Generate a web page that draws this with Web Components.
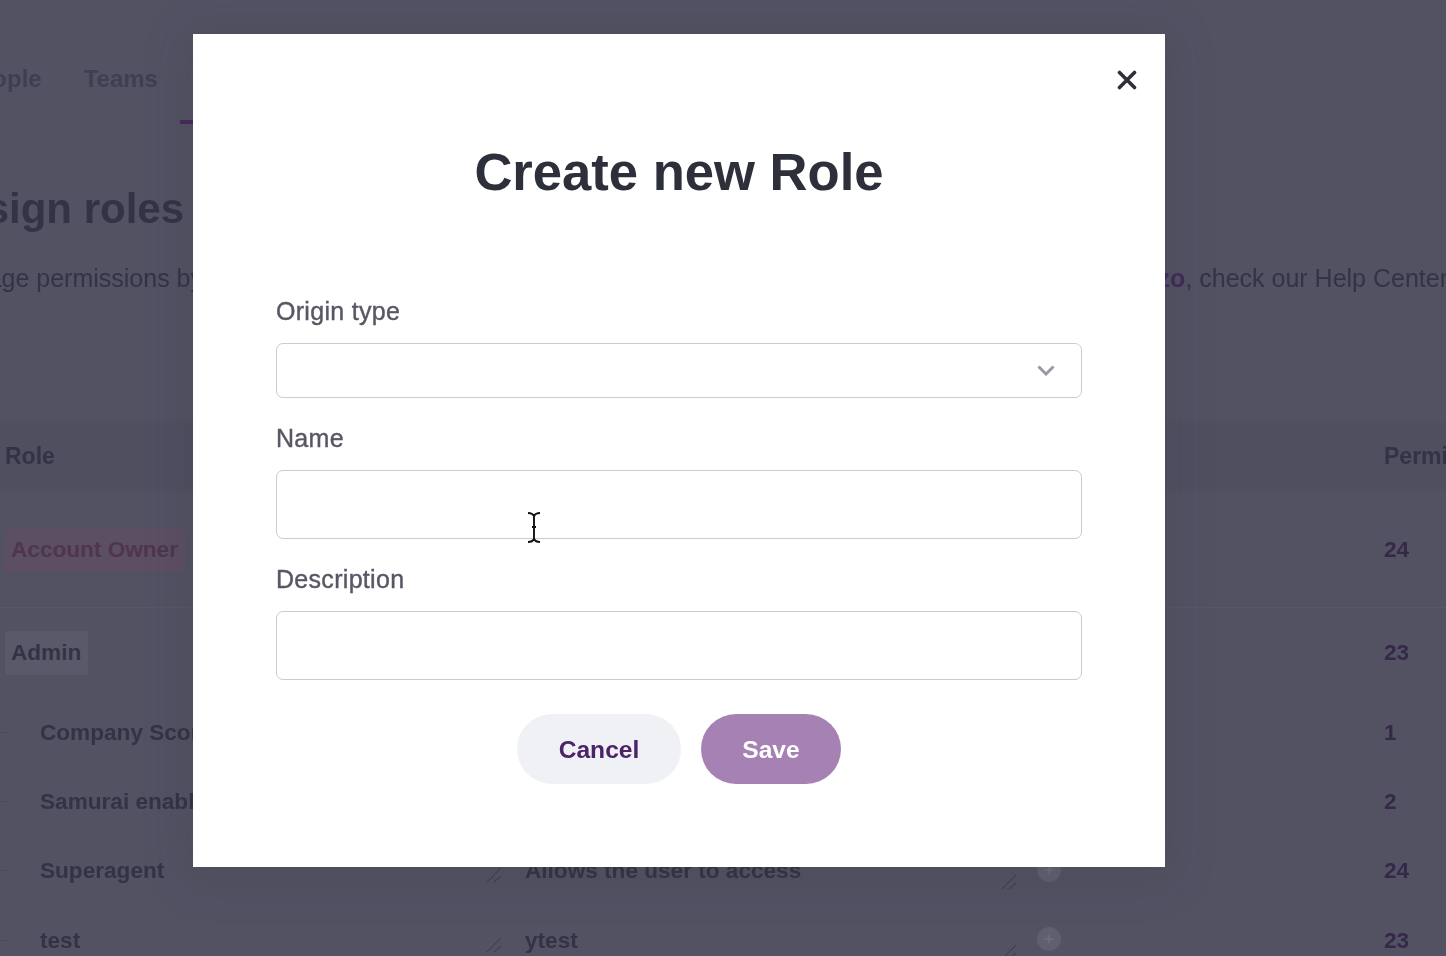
<!DOCTYPE html>
<html lang="en">
<head>
<meta charset="utf-8">
<title>Create new Role</title>
<style>
    html, body {
        margin: 0;
        height: 100%;
        overflow: hidden;
        background: #525263;
        font-family: "Liberation Sans", Arial, sans-serif;
    }
</style>
</head>
<body>
<roles-page></roles-page>
<role-modal></role-modal>

<script>
class RoleRow extends HTMLElement {
    connectedCallback() {
        const label = this.getAttribute('label') || '';
        const desc = this.getAttribute('desc') || '';
        const count = this.getAttribute('count') || '';
        const badge = this.getAttribute('badge');
        const first = badge
            ? `<span class="badge ${badge}">${label}</span>`
            : `<i class="tick"></i><span class="name">${label}</span>`;
        const handle = `<svg class="handle" width="18" height="16" viewBox="0 0 18 16" fill="none" stroke="#383849" stroke-width="1"><path d="M1 15 15 1M8 15l7-6"/></svg>`;
        const tools = desc ? `
            <div class="cell first">${first}${handle}</div>
            <div class="cell desc"><span class="name">${desc}</span>${handle}</div>
            <div class="cell add"><svg width="24" height="24" viewBox="0 0 24 24"><circle cx="12" cy="12" r="12" fill="#5f5f70"/><path d="M12 7.5v9M7.5 12h9" stroke="#6f6f7f" stroke-width="1.5"/></svg></div>
        ` : `
            <div class="cell first">${first}</div>
            <div class="cell desc"></div>
            <div class="cell add"></div>
        `;
        this.attachShadow({ mode: 'open' });
        this.shadowRoot.innerHTML = `
            <style>
                :host {
                    display: grid;
                    grid-template-columns: 520px 500px 359px 1fr;
                    align-items: center;
                    box-sizing: border-box;
                    padding-left: 5px;
                    font-size: 22.6px;
                    font-weight: 700;
                    color: #333345;
                }
                .cell {
                    display: flex;
                    align-items: center;
                    position: relative;
                    min-height: 30px;
                }
                .tick {
                    position: absolute;
                    left: -5px;
                    top: 14px;
                    width: 9px;
                    height: 1px;
                    background: #4b4b5c;
                }
                .first .name { margin-left: 35px; }
                .handle {
                    position: absolute;
                    right: 21px;
                    top: 11px;
                }
                .desc .handle { right: 6px; top: 18px; }
                .badge {
                    display: inline-block;
                    line-height: 44px;
                    padding: 0 7px 0 6px;
                    border-radius: 3px;
                }
                .badge.owner { background: #5c4f62; color: #4f3550; }
                .badge.admin { background: #59596a; color: #333345; }
                .add { padding-left: 12px; }
                .add svg { margin-top: -3px; }
                .count { color: #362848; }
            </style>
            ${tools}
            <div class="cell count">${count}</div>
        `;
    }
}

class RolesPage extends HTMLElement {
    connectedCallback() {
        this.attachShadow({ mode: 'open' });
        this.shadowRoot.innerHTML = `
            <style>
                :host {
                    display: block;
                    width: 1446px;
                    height: 956px;
                    overflow: hidden;
                    color: #333345;
                    filter: blur(0.7px);
                }
                .tabs {
                    display: flex;
                    gap: 42px;
                    margin-left: -37px;
                    padding-top: 65px;
                    font-size: 24px;
                    font-weight: 700;
                    line-height: 28px;
                    color: #3f3f51;
                }
                .active {
                    height: 4px;
                    width: 60px;
                    margin: 27px 0 0 180px;
                    background: #452a5c;
                }
                h1 {
                    margin: 60px 0 0 -68px;
                    font-size: 42px;
                    line-height: 50px;
                    white-space: nowrap;
                }
                .sub {
                    display: flex;
                    justify-content: space-between;
                    margin: 30px -2px 0 -61px;
                    font-size: 25px;
                    line-height: 28px;
                    white-space: nowrap;
                }
                .sub b { color: #412b59; }
                .head {
                    display: flex;
                    justify-content: space-between;
                    margin-top: 129px;
                    height: 70px;
                    align-items: center;
                    padding: 0 0 0 5px;
                    background: #4f4f60;
                    font-size: 23px;
                    font-weight: 700;
                    box-sizing: border-box;
                }
                .head span:last-child { width: 62px; overflow: hidden; }
                .owner-row { height: 117px; padding-top: 2px; border-bottom: 1px solid #575767; }
                .admin-row { height: 90px; }
                .child-row { height: 69.3px; }
            </style>
            <nav class="tabs"><span>People</span><span>Teams</span></nav>
            <div class="active"></div>
            <h1>Assign roles</h1>
            <p class="sub" style="margin-bottom:0"><span>Manage permissions by</span><span><b>zo</b>, check our Help Center</span></p>
            <div class="head"><span>Role</span><span>Permissions</span></div>
            <role-row class="owner-row" badge="owner" label="Account Owner" count="24"></role-row>
            <role-row class="admin-row" badge="admin" label="Admin" count="23"></role-row>
            <role-row class="child-row" label="Company Score" count="1"></role-row>
            <role-row class="child-row" label="Samurai enabled" count="2"></role-row>
            <role-row class="child-row" label="Superagent" desc="Allows the user to access" count="24"></role-row>
            <role-row class="child-row" label="test" desc="ytest" count="23"></role-row>
        `;
    }
}

class RoleField extends HTMLElement {
    connectedCallback() {
        const select = this.hasAttribute('select');
        this.attachShadow({ mode: 'open' });
        this.shadowRoot.innerHTML = `
            <style>
                :host {
                    display: block;
                    color: #575765;
                }
                label {
                    display: block;
                    font-size: 25px;
                    letter-spacing: 0.3px;
                    line-height: 28px;
                    -webkit-text-stroke: 0.4px #575765;
                }
                .box {
                    display: flex;
                    align-items: center;
                    justify-content: flex-end;
                    box-sizing: border-box;
                    height: var(--box-height, 69px);
                    margin-top: var(--box-gap, 18px);
                    padding-right: 26px;
                    border: 1px solid #c8ccd4;
                    border-radius: 7px;
                    background: #fff;
                }
            </style>
            <label><slot></slot></label>
            <div class="box">
                ${select ? `<svg width="18" height="11" viewBox="0 0 18 11" fill="none" stroke="#9a9aa6" stroke-width="3"><path d="M1.5 1.5 9 9l7.5-7.5"/></svg>` : ''}
            </div>
        `;
    }
}

class RoleButton extends HTMLElement {
    connectedCallback() {
        this.attachShadow({ mode: 'open' });
        this.shadowRoot.innerHTML = `
            <style>
                :host {
                    display: flex;
                    align-items: center;
                    justify-content: center;
                    box-sizing: border-box;
                    height: 70px;
                    padding-top: 2px;
                    border-radius: 35px;
                    font-size: 24.6px;
                    font-weight: 700;
                    cursor: pointer;
                }
                :host([variant="cancel"]) {
                    width: 164px;
                    background: #f0f1f4;
                    color: #4a2369;
                }
                :host([variant="save"]) {
                    width: 140px;
                    background: #a682b4;
                    color: #fff;
                }
            </style>
            <slot></slot>
        `;
    }
}

class RoleModal extends HTMLElement {
    connectedCallback() {
        this.attachShadow({ mode: 'open' });
        this.shadowRoot.innerHTML = `
            <style>
                :host {
                    display: block;
                    position: absolute;
                    top: 34px;
                    left: 193px;
                    width: 972px;
                    height: 833px;
                    box-sizing: border-box;
                    padding: 0 83px;
                    background: #fff;
                    box-shadow: 0 6px 44px 8px rgba(50, 50, 66, 0.14);
                }
                .close {
                    position: absolute;
                    top: 36px;
                    right: 28px;
                    display: block;
                }
                h2 {
                    margin: 0;
                    padding-top: 107px;
                    text-align: center;
                    font-size: 52.6px;
                    line-height: 62px;
                    font-weight: 700;
                    color: #2d2f3a;
                }
                .fields {
                    display: flex;
                    flex-direction: column;
                    gap: 26px;
                    margin-top: 94px;
                }
                .fields role-field:first-child { --box-height: 55px; --box-gap: 18px; }
                .actions {
                    display: flex;
                    justify-content: center;
                    gap: 20px;
                    margin-top: 34px;
                }
                .cursor {
                    position: absolute;
                    left: 334px;
                    top: 477px;
                }
            </style>
            <svg class="close" width="20" height="20" viewBox="0 0 20 20" fill="none" stroke="#2d2f3a" stroke-width="3.6" stroke-linecap="round"><path d="M2.5 2.5l15 15M17.5 2.5l-15 15"/></svg>
            <h2>Create new Role</h2>
            <div class="fields">
                <role-field select>Origin type</role-field>
                <role-field>Name</role-field>
                <role-field>Description</role-field>
            </div>
            <div class="actions">
                <role-button variant="cancel">Cancel</role-button>
                <role-button variant="save">Save</role-button>
            </div>
            <svg class="cursor" width="14" height="33" viewBox="0 0 14 33" fill="none" stroke="#111" stroke-width="1.9"><path d="M1 2c3 0 5 1 6 3 1-2 3-3 6-3M7 5v23M1 31c3 0 5-1 6-3 1 2 3 3 6 3M5 16h4"/></svg>
        `;
    }
}

customElements.define('role-row', RoleRow);
customElements.define('roles-page', RolesPage);
customElements.define('role-field', RoleField);
customElements.define('role-button', RoleButton);
customElements.define('role-modal', RoleModal);
</script>
</body>
</html>
